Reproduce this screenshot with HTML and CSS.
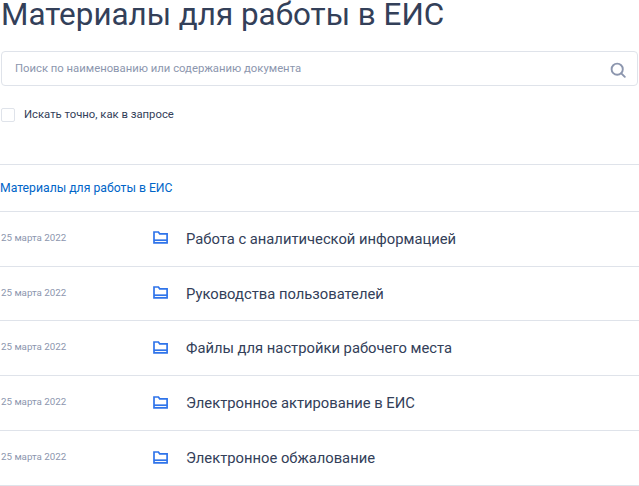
FILE: index.html
```html
<!DOCTYPE html>
<html lang="ru">
<head>
<meta charset="utf-8">
<title>Материалы для работы в ЕИС</title>
<link rel="stylesheet" href="styles.css">
</head>
<body>
<h1 class="title">Материалы для работы в ЕИС</h1>
<div class="search">
  <span class="search-text">Поиск по наименованию или содержанию документа</span>
  <svg class="search-icon" width="16" height="16" viewBox="0 0 16 16" fill="none" stroke="#8c96ae" stroke-width="1.9"><circle cx="7.2" cy="7.2" r="5.6"/><path d="M11.3 11.3 14.8 14.8" stroke-linecap="round"/></svg>
</div>
<label class="exact"><span class="box"></span><span class="exact-text">Искать точно, как в запросе</span></label>
<div class="crumb"><a class="crumb-link">Материалы для работы в ЕИС</a></div>
<ul class="list">
  <li class="row"><span class="date">25 марта 2022</span><svg class="folder" width="15" height="13" viewBox="0 0 15 13" fill="none" stroke="#2f74ea" stroke-width="1.7"><path d="M1 11.9V1h4.4l1.3 1.8h7.4v9.1z"/><path d="M1 9.2h13"/></svg><span class="name">Работа с аналитической информацией</span></li>
  <li class="row"><span class="date">25 марта 2022</span><svg class="folder" width="15" height="13" viewBox="0 0 15 13" fill="none" stroke="#2f74ea" stroke-width="1.7"><path d="M1 11.9V1h4.4l1.3 1.8h7.4v9.1z"/><path d="M1 9.2h13"/></svg><span class="name">Руководства пользователей</span></li>
  <li class="row"><span class="date">25 марта 2022</span><svg class="folder" width="15" height="13" viewBox="0 0 15 13" fill="none" stroke="#2f74ea" stroke-width="1.7"><path d="M1 11.9V1h4.4l1.3 1.8h7.4v9.1z"/><path d="M1 9.2h13"/></svg><span class="name">Файлы для настройки рабочего места</span></li>
  <li class="row"><span class="date">25 марта 2022</span><svg class="folder" width="15" height="13" viewBox="0 0 15 13" fill="none" stroke="#2f74ea" stroke-width="1.7"><path d="M1 11.9V1h4.4l1.3 1.8h7.4v9.1z"/><path d="M1 9.2h13"/></svg><span class="name">Электронное актирование в ЕИС</span></li>
  <li class="row"><span class="date">25 марта 2022</span><svg class="folder" width="15" height="13" viewBox="0 0 15 13" fill="none" stroke="#2f74ea" stroke-width="1.7"><path d="M1 11.9V1h4.4l1.3 1.8h7.4v9.1z"/><path d="M1 9.2h13"/></svg><span class="name">Электронное обжалование</span></li>
</ul>
</body>
</html>
```
FILE: styles.css
```css
html, body { margin: 0; padding: 0; background: #fff; overflow: hidden; }
body { font-family: Roboto, sans-serif; color: #334059; height: 486px; }
.title { margin: -4px 0 0; font-size: 31.4px; font-weight: 400; line-height: 37px; padding: 0 0 4px 1px; height: 51px; color: #334059; }
.search { display: flex; align-items: center; justify-content: space-between; box-sizing: border-box; height: 35px; margin: 0 1px; padding: 0 11px 0 13px; border: 1px solid #dfe3ea; border-radius: 4px; }
.search-text { font-size: 11.3px; color: #8c96ae; }
.search-icon { margin-top: 2px; }
.exact { display: flex; align-items: center; gap: 9px; margin-top: 21px; height: 16px; font-size: 11.3px; padding-left: 1px; color: #334059; }
.exact-text { padding-bottom: 2px; }
.box { box-sizing: border-box; width: 14px; height: 14px; border: 1px solid #dfe3ea; border-radius: 2px; }
.crumb { margin-top: 41px; border-top: 1px solid #dfe3ea; height: 46px; display: flex; align-items: center; }
.crumb-link { font-size: 12.22px; color: #0065c8; }
.list { list-style: none; margin: 0; padding: 0; }
.row { display: flex; align-items: flex-start; box-sizing: border-box; height: 55px; border-top: 1px solid #dfe3ea; }
.row:nth-child(2) { height: 54px; }
.row:last-child { border-bottom: 1px solid #dfe3ea; height: 56px; }
.date { width: 153px; flex: none; margin-top: 20px; padding-left: 1px; box-sizing: border-box; font-size: 9.75px; line-height: 12px; color: #8c96ae; }
.folder { flex: none; margin: 19px 18px 0 0; }
.row:nth-child(n+3) .folder { margin-top: 20px; }
.name { margin-top: 18px; font-size: 14.78px; line-height: 18px; color: #334059; }
```
